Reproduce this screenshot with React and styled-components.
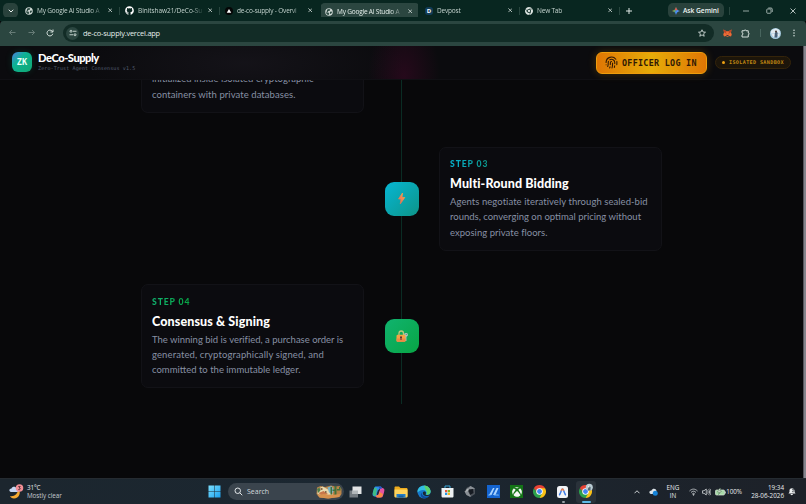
import React from "react";
import styled, { createGlobalStyle } from "styled-components";
import { Fingerprint } from "lucide-react";
import { FaGithub, FaXbox } from "react-icons/fa";

const GlobalStyle = createGlobalStyle`
  * {
    box-sizing: border-box;
  }
  body {
    margin: 0;
    background: #08080a;
    overflow: hidden;
    font-family: "Open Sans", "Noto Sans", sans-serif;
  }
  svg {
    display: block;
    flex: none;
  }
`;

const Screen = styled.div`
  width: 806px;
  height: 504px;
  display: flex;
  flex-direction: column;
  overflow: hidden;
`;

/* ---------- browser ---------- */

const TabStrip = styled.div`
  height: 21px;
  flex: none;
  display: flex;
  align-items: center;
  background: #082620;
`;

const TabSearch = styled.div`
  width: 15px;
  height: 15px;
  margin: 0 2px 0 3px;
  border-radius: 5px;
  background: #29423c;
  display: flex;
  align-items: center;
  justify-content: center;
`;

const Tab = styled.div`
  width: 100px;
  height: ${(p) => (p.$active ? "18px" : "15px")};
  ${(p) => p.$active && "align-self: flex-end;"}
  padding: ${(p) => (p.$active ? "0 8px 1px 5px" : "0 8px 0 5px")};
  display: flex;
  align-items: center;
  border-radius: 5px 5px 0 0;
  background: ${(p) => (p.$active ? "linear-gradient(#2b4640, #2b4640) 1px 0 / 97px 100% no-repeat" : "none")};
`;

const TabTitle = styled.span`
  flex: 1;
  margin: 0 6px 0 4px;
  overflow: hidden;
  white-space: nowrap;
  font-size: 6.5px;
  line-height: 12px;
  letter-spacing: ${(p) => p.$ls || -0.2}px;
  color: ${(p) => (p.$active ? "#e4eeea" : "#c3d2cd")};
  mask-image: linear-gradient(90deg, #000 54px, transparent 66px);
`;

const Divider = styled.i`
  width: 1px;
  height: ${(p) => p.$h || 8}px;
  margin: ${(p) => p.$m || "0 0 0 -1px"};
  background: ${(p) => p.$c || "#29463f"};
`;

const PlusBox = styled.div`
  width: 18px;
  display: flex;
  justify-content: center;
`;

const GeminiButton = styled.div`
  width: 56px;
  height: 15px;
  margin-left: 30px;
  padding-left: 4px;
  display: flex;
  align-items: center;
  gap: 3px;
  border-radius: 5px;
  background: #29423c;
  color: #eef5f2;
  font-size: 6.7px;
  font-weight: 600;
  letter-spacing: -0.05px;
  white-space: nowrap;
`;

const WindowButtons = styled.div`
  display: flex;
  align-items: center;
  gap: 17px;
  margin-left: 13px;
`;

const Toolbar = styled.div`
  height: 25px;
  flex: none;
  display: flex;
  align-items: center;
  padding: 0 8px 1px 9px;
  background: #2b4640;
  border-radius: 4px 4px 0 0;
  box-shadow: 0 -5px 0 -1px #082620;
`;

const NavIcons = styled.div`
  width: 54px;
  display: flex;
  gap: 11.5px;
`;

const AddressBar = styled.div`
  width: 651px;
  height: 18px;
  padding: 0 8px 0 3px;
  display: flex;
  align-items: center;
  border-radius: 9px;
  background: #122c26;
`;

const SiteInfo = styled.div`
  width: 13px;
  height: 13px;
  border-radius: 50%;
  background: #2b4640;
  display: flex;
  align-items: center;
  justify-content: center;
`;

const Url = styled.span`
  flex: 1;
  margin-left: 4px;
  font-size: 7.4px;
  letter-spacing: -0.2px;
  color: #e6efec;
`;

const ToolbarRight = styled.div`
  flex: 1;
  padding-left: 9px;
  display: flex;
  align-items: center;
  justify-content: space-between;
`;

/* ---------- page ---------- */

const Page = styled.div`
  height: 432px;
  flex: none;
  display: flex;
`;

const Scrollbar = styled.div`
  width: 3px;
  background: #85858d;
  border-left: 1px solid #56565d;
`;

const PageBody = styled.div`
  width: 803px;
  height: 432px;
  overflow: hidden;
  background: #08080a;
`;

const Header = styled.header`
  height: 34px;
  padding: 0 12px;
  display: flex;
  align-items: center;
  background:
    radial-gradient(ellipse 36px 60px at 404px 30px, rgba(64, 8, 40, 0.5), transparent),
    radial-gradient(ellipse 160px 44px at 245px 17px, rgba(34, 30, 40, 0.4), transparent),
    #0b0b0e;
  border-bottom: 1px solid #101014;
`;

const Logo = styled.div`
  width: 20px;
  height: 20px;
  margin-top: -1px;
  border-radius: 6px;
  background: linear-gradient(135deg, #4b7fe0 0%, #0eb293 38%, #10a973 100%);
  box-shadow: 0 0 7px rgba(16, 185, 129, 0.18);
  color: #e8fff8;
  font: bold 8.6px/20px "DejaVu Sans Mono", monospace;
  text-align: center;
`;

const Brand = styled.div`
  flex: 1;
  margin: -1px 0 0 6px;
`;

const BrandName = styled.div`
  font: 900 11.2px/12px Lato, sans-serif;
  letter-spacing: -0.5px;
  color: #fff;
`;

const Tagline = styled.div`
  margin-top: 1px;
  font: 5px/7px "DejaVu Sans Mono", monospace;
  letter-spacing: 0.13px;
  color: #535d70;
`;

const LoginButton = styled.button`
  width: 111px;
  height: 22px;
  padding: 0 0 0 8px;
  display: flex;
  align-items: center;
  gap: 4px;
  border: 1px solid #ee9d0c;
  border-radius: 6px;
  background: linear-gradient(90deg, #df7604, #e6ac08 50%, #df7604);
  box-shadow: 0 0 9px rgba(234, 160, 8, 0.24);
  color: #301905;
  font: bold 8.4px/20px "DejaVu Sans Mono", monospace;
  letter-spacing: 0.3px;
  white-space: nowrap;
`;

const Badge = styled.div`
  width: 76px;
  height: 13px;
  margin-left: 8px;
  padding-left: 6px;
  display: flex;
  align-items: center;
  gap: 4px;
  border: 1px solid #34240a;
  border-radius: 7px;
  background: #1c150a;
  color: #c08812;
  font: bold 5.1px/11px "DejaVu Sans Mono", monospace;
  letter-spacing: 0.37px;
  white-space: nowrap;

  &::before {
    content: "";
    width: 3px;
    height: 3px;
    border-radius: 50%;
    background: #eda112;
  }
`;

const Timeline = styled.main`
  width: 521px;
  height: 324px;
  margin-left: 141px;
  display: grid;
  grid-template-columns: 223px 75px 223px;
  grid-template-rows: 33px 104px 104px;
  row-gap: 33.5px;
  align-items: center;
  align-content: start;
  justify-items: center;
  background: linear-gradient(#0a2c24, #0a2c24) 260px 0 / 1px 100% no-repeat;
`;

const Card = styled.article`
  grid-column: ${(p) => (p.$side === "right" ? 3 : 1)};
  grid-row: ${(p) => p.$row};
  width: 223px;
  height: 100%;
  padding: 11.5px 10px 10px;
  border: 1px solid #121217;
  border-radius: 7px;
  background: #0b0b0f;
  font-family: Lato, sans-serif;

  /* scrolled under the header: only the end of the card is left */
  ${(p) =>
    p.$scrolled &&
    `
    display: flex;
    flex-direction: column;
    justify-content: flex-end;
    overflow: hidden;
    border-top: 0;
    border-radius: 0 0 7px 7px;
  `}
`;

const StepLabel = styled.div`
  width: max-content;
  font-size: 8.6px;
  font-weight: 900;
  line-height: 11px;
  letter-spacing: 0.9px;
  color: transparent;
  background: linear-gradient(90deg, ${(p) => p.$from}, ${(p) => p.$to});
  background-clip: text;
`;

const CardTitle = styled.h3`
  margin: 5px 0 2px;
  font-size: 12.5px;
  font-weight: 900;
  line-height: 17px;
  letter-spacing: 0.12px;
  color: #fff;
`;

const Line = styled.div`
  flex: none;
  font-size: 9.5px;
  line-height: 15.3px;
  letter-spacing: ${(p) => p.$ls || 0}px;
  color: #8790a4;
  white-space: nowrap;
`;

const Node = styled.div`
  grid-column: 2;
  grid-row: ${(p) => p.$row};
  width: 34px;
  height: 34px;
  border-radius: 9px;
  background: linear-gradient(135deg, ${(p) => p.$from}, ${(p) => p.$to});
  display: flex;
  align-items: center;
  justify-content: center;
`;

/* ---------- taskbar ---------- */

const Taskbar = styled.footer`
  height: 26px;
  flex: none;
  padding: 0 10px 0 9px;
  display: flex;
  align-items: center;
  background: linear-gradient(90deg, #1c262e, #1b2731 45%, #1d2128);
  border-top: 1px solid #252b31;
  color: #e9ecee;
  font-size: 6.3px;
  line-height: 8px;
`;

const Weather = styled.div`
  width: 199px;
  display: flex;
  align-items: center;
  gap: 3px;
  letter-spacing: -0.1px;

  small {
    display: block;
    font-size: 6.3px;
    letter-spacing: -0.05px;
    color: #c5cacf;
  }
`;

const SearchBox = styled.div`
  width: 116px;
  height: 17px;
  margin: 0 1px 0 7px;
  padding: 0 2px 0 6px;
  display: flex;
  align-items: center;
  gap: 4px;
  border-radius: 9px;
  background: #3a444d;
  font-size: 7px;

  span {
    flex: 1;
    color: #d3d8dc;
  }
`;

const Apps = styled.div`
  display: flex;
  align-items: center;
  gap: 3.1px;
`;

const AppSlot = styled.div`
  position: relative;
  width: 20px;
  height: 22px;
  display: flex;
  align-items: center;
  justify-content: center;
  border-radius: 3px;
  background: ${(p) => (p.$active ? "#2a323a" : "none")};
`;

const RunMark = styled.i`
  position: absolute;
  bottom: 0;
  left: ${(p) => (p.$wide ? 6 : 9)}px;
  width: ${(p) => (p.$wide ? 9 : 3)}px;
  height: 2px;
  border-radius: 1px;
  background: ${(p) => (p.$wide ? "#5fb9e6" : "#9aa1a7")};
`;

const Tray = styled.div`
  flex: 1;
  display: flex;
  align-items: center;
  justify-content: flex-end;
`;

const TrayText = styled.div`
  width: ${(p) => p.$w}px;
  margin-left: ${(p) => p.$ml || 0}px;
  text-align: ${(p) => p.$align || "center"};
  letter-spacing: ${(p) => p.$ls || 0}px;
  white-space: nowrap;
`;

const TrayIcons = styled.div`
  display: flex;
  align-items: center;
  gap: 4px;
`;

/* ---------- drawings ---------- */

const Close = ({ size = 4.5, color = "#dce6e2", w = 1 }) => (
  <svg width={size} height={size} viewBox="0 0 6 6" stroke={color} strokeWidth={w}>
    <path d="M.5.5l5 5M5.5.5l-5 5" />
  </svg>
);

const Globe = () => (
  <svg width="8" height="8" viewBox="0 0 16 16">
    <circle cx="8" cy="8" r="7.500" fill="#cfd9d5" />
    <path d="M2 8.500l5 .5 1.500 3-1.500 2C4 13.500 2 11.500 2 8.500zM4.500 3l3.500-1 2.500 1-1 2.500-3 .5-.5 2-3-.5zM10 7.500l3.500-.5.3 2.500-2.300 2.500-2-1z" fill="#2c4a42" />
  </svg>
);

const Vercel = () => (
  <svg width="8" height="8" viewBox="0 0 16 16">
    <circle cx="8" cy="8" r="8" fill="#050606" />
    <path d="M8 4l4.500 7.500h-9z" fill="#fff" />
  </svg>
);

const DevpostIcon = styled.div`
  width: 8px;
  height: 8px;
  border-radius: 3px;
  background: #123d58;
  color: #fff;
  font: bold 6px/8px "Open Sans", sans-serif;
  text-align: center;
`;

const Chrome = ({ size = 13, mono, badge }) => {
  const [r, y, g, b] = mono
    ? ["#dfe6e3", "#dfe6e3", "#dfe6e3", "#dfe6e3"]
    : ["#e74235", "#fbc116", "#2ba24c", "#4285f4"];
  return (
    <svg width={size} height={size} viewBox="0 0 24 24" overflow="visible">
      <path d="M12 12L1.600 6A12 12 0 0 1 22.400 6z" fill={r} />
      <path d="M12 12V6h10.400A12 12 0 0 1 12 24z" fill={y} />
      <path d="M1.600 6A12 12 0 0 0 12 24l5.200-9L12 12 6.800 15z" fill={g} />
      <path d="M1.600 6l5.200 9L12 12 8 6z" fill={mono ? g : r} />
      <path d="M1.600 6L6.800 15 12 17 8 12z" fill={g} />
      {mono && <path d="M12 6h10.400M6.800 15L1.600 6M17.200 15L12 24" stroke="#082620" strokeWidth="1.600" />}
      <circle cx="12" cy="12" r="6" fill={mono ? "#082620" : "#fff"} />
      <circle cx="12" cy="12" r={mono ? 3.5 : 4.5} fill={b} />
      {badge && (
        <g>
          <circle cx="19" cy="4" r="6.500" fill="#b9cbd3" />
          <path d="M16 10l1-5 2-3 2.500 2L21 10z" fill="#52656f" />
          <circle cx="18" cy="3" r="1.500" fill="#f0ede7" />
        </g>
      )}
    </svg>
  );
};

const GeminiStar = () => (
  <svg width="8" height="8" viewBox="0 0 16 16">
    <defs>
      <linearGradient id="gem" x1="0" y1="0.300" x2="1" y2="0.700">
        <stop offset="0.100" stopColor="#f6c343" />
        <stop offset="0.350" stopColor="#5aa66d" />
        <stop offset="0.550" stopColor="#4286f5" />
        <stop offset="0.900" stopColor="#6fa5ff" />
      </linearGradient>
    </defs>
    <path d="M8 0c1 4.500 3.500 7 8 8-4.500 1-7 3.500-8 8-1-4.500-3.500-7-8-8 4.500-1 7-3.500 8-8z" fill="url(#gem)" />
    <path d="M8 0c.6 2.600 1.600 4.500 3.200 5.800L8 7 5.500 5.200C6.700 3.900 7.500 2.200 8 0z" fill="#e8574c" />
  </svg>
);

const Arrow = ({ flip }) => (
  <svg width="7" height="7" viewBox="0 0 14 14" fill="none" stroke="#71857f" strokeWidth="1.700">
    <path d={flip ? "M1 7h12M8 2l5 5-5 5" : "M13 7H1M6 2L1 7l5 5"} />
  </svg>
);

const Reload = () => (
  <svg width="8" height="8" viewBox="0 0 16 16" fill="none" stroke="#dce7e3" strokeWidth="1.900">
    <path d="M13.500 9.500A5.800 5.800 0 1 1 12 4l1.500 1.500" />
    <path d="M14 1v5H9" />
  </svg>
);

const Tune = () => (
  <svg width="8" height="8" viewBox="0 0 16 16" fill="none" stroke="#dce7e3" strokeWidth="1.700">
    <circle cx="4" cy="4.500" r="2" />
    <path d="M8 4.500h7M1 11.500h7" />
    <circle cx="12" cy="11.500" r="2" />
  </svg>
);

const Star = () => (
  <svg width="8" height="8" viewBox="0 0 16 16" fill="none" stroke="#e0e9e6" strokeWidth="1.600">
    <path d="M8 1.500l2 4.500 5 .4-3.800 3.200 1.200 4.900L8 11.800l-4.400 2.700 1.200-4.900L1 6.400 6 6z" />
  </svg>
);

const Fox = () => (
  <svg width="9" height="8" viewBox="0 0 18 16">
    <path d="M1 1l6 3.500h4L17 1l-1 6 1.500 4-1.500 4-4-1-2 1.500H8L6 14l-4 1L.5 11 2 7z" fill="#ee6b35" />
    <path d="M1 1l6 3.500L6 8 2 7zM17 1l-6 3.500L12 8l4-1z" fill="#b94529" />
    <path d="M7 12h4v2H7z" fill="#3a3a3e" />
    <path d="M5 9l2 .5-.5 1zM13 9l-2 .5.5 1z" fill="#20343f" />
  </svg>
);

const Puzzle = () => (
  <svg width="9" height="9" viewBox="0 0 18 18" fill="none" stroke="#dce7e3" strokeWidth="1.900">
    <path d="M2 3.500h4.500C6.500 1 10 1 10 3.500h4.500V8c2.500 0 2.500 3.500 0 3.500V16H2v-4.200c2.500 0 2.500-4.300 0-4.300z" />
  </svg>
);

const Avatar = () => (
  <svg width="11" height="11" viewBox="0 0 22 22">
    <circle cx="11" cy="11" r="11" fill="#a8cbe0" />
    <path d="M2 6c3-5 12-7 17-1l1 6H2z" fill="#dfeaf0" />
    <path d="M9 19l.5-8 2-4 3 1 1 4-1.500 7z" fill="#4a6076" />
    <circle cx="12" cy="7" r="2" fill="#4b3b35" />
    <path d="M3 13l6-2-1 8zM15 12l5 1-3 5z" fill="#e9edf0" />
  </svg>
);

const Bolt = () => (
  <svg width="9" height="13" viewBox="0 0 18 26">
    <defs>
      <linearGradient id="bolt" x1="1" y1="0" x2="0" y2="1">
        <stop offset="0" stopColor="#ffad43" />
        <stop offset="0.600" stopColor="#f17c54" />
        <stop offset="1" stopColor="#d9734f" />
      </linearGradient>
    </defs>
    <path d="M11 2L3 14h5L6.500 24 15.500 11h-5.500z" fill="url(#bolt)" stroke="url(#bolt)" strokeWidth="1.500" strokeLinejoin="round" />
  </svg>
);

const LockKey = () => (
  <svg width="14" height="14" viewBox="0 0 28 28">
    <path d="M19 9h6v5l-2 1v9h-5z" fill="#a5bcb5" />
    <circle cx="22" cy="11.500" r="3.500" fill="#b4c4c0" />
    <circle cx="22.500" cy="11" r="1.200" fill="#4c8570" />
    <path d="M8 13V8.500a4.500 4.500 0 0 1 9 0V13" fill="none" stroke="#b7c67c" strokeWidth="2.600" />
    <rect x="3" y="11.500" width="18" height="14" rx="2.500" fill="#f4a344" />
    <path d="M3 19h18v4a2.500 2.500 0 0 1-2.500 2.500h-13A2.500 2.500 0 0 1 3 23z" fill="#ed8845" />
    <circle cx="12" cy="16.500" r="2" fill="#51343c" />
    <path d="M11 17h2v5h-2z" fill="#51343c" />
  </svg>
);

const WeatherIcon = () => (
  <svg width="15" height="16" viewBox="0 0 30 32">
    <path d="M19 9c6 8 1 20-9 20-4 0-7-2-8-5 8 2 16-4 17-15z" fill="#f6a930" />
    <path d="M4 16c-5-1-4-7 1-7 1-5 9-5 10 0 6 0 6 7 1 7z" fill="#c5d7f3" />
    <circle cx="21" cy="8" r="7.500" fill="#f28e95" />
    <path d="M18.500 5h4L20 8c4-.5 3.500 4.500-1.500 3" fill="none" stroke="#3b2229" strokeWidth="1.500" />
  </svg>
);

const Windows = () => (
  <svg width="13" height="13" viewBox="0 0 26 26">
    <defs>
      <linearGradient id="win" x1="0" y1="0" x2="1" y2="1">
        <stop offset="0" stopColor="#7be0ff" />
        <stop offset="1" stopColor="#1ba0ee" />
      </linearGradient>
    </defs>
    <path d="M1 1h11.500v11.500H1zM13.500 1H25v11.500H13.500zM1 13.500h11.500V25H1zM13.500 13.500H25V25H13.500z" fill="url(#win)" />
  </svg>
);

const SearchArt = () => (
  <svg width="26" height="14" viewBox="0 0 52 28">
    <path d="M2 5l7-3 9 2 12-3 8 2 9-1 4 6v10l-4 6-22 3-18-2-6-7z" fill="#b98348" />
    <path d="M3 8l10-5 13 7 8 9-20 2L3 18z" fill="#e8d9ae" />
    <path d="M5 16l10-4 9 6-12 4z" fill="#c8774a" />
    <path d="M23 5l8-3 5 8-4 8-6-3z" fill="#7bb4c7" />
    <path d="M29 4h3v15h-3zM37 2h4v20h-4zM33 9h4v3h-4zM42 8h5v3h-5zM46 4h3v7h-3z" fill="#41703b" />
    <path d="M3 20l12-2 16 2 18-2-3 6-22 3-17-2z" fill="#d6914e" />
    <path d="M2 8l5-3 2 6-5 5z" fill="#4f7b47" />
    <path d="M9 6h4v4H9zM18 12h3v4h-3z" fill="#8a6a49" />
  </svg>
);

const TaskView = () => (
  <svg width="13" height="12" viewBox="0 0 26 24">
    <rect x="1" y="9" width="17" height="14" fill="#747b81" />
    <rect x="7" y="1" width="18" height="15" fill="#e2e4e5" />
    <path d="M7 9h11v7H7z" fill="#b2b7ba" />
  </svg>
);

const Copilot = () => (
  <svg width="13" height="12" viewBox="0 0 26 24">
    <path d="M8 1h8c2 0 3 1 4 4l-6 1-4 12c-1 3-2 4-5 3-5-1-4-5-3-9C4 6 4 1 8 1z" fill="#2c8eea" />
    <path d="M2 12c1-4 2-7 3-9l5 2-2 14c-1 2-8 2-6-7z" fill="#41bd86" />
    <path d="M18 23h-7c-2 0-3-1-4-3l5-2 4-12c1-3 3-3 5-2 5 1 4 5 3 9-2 6-2 10-6 10z" fill="#e453a0" />
    <path d="M8 19l5-1 2-6 7 4c-1 5-3 7-6 7h-4c-2 0-3-1-4-4z" fill="#fa8a42" />
    <path d="M13 1h4c2 0 3 2 3 4l-5 1z" fill="#2756c4" />
    <path d="M12 8h3l-3 9H9z" fill="#232b40" />
  </svg>
);

const Folder = () => (
  <svg width="14" height="12" viewBox="0 0 28 24">
    <path d="M1 3c0-1 1-2 2-2h7l3 3h12c1 0 2 1 2 2v15H1z" fill="#edab1d" />
    <path d="M1 7h26v14c0 1-1 2-2 2H3c-1 0-2-1-2-2z" fill="#fed35d" />
    <path d="M5 16h18v7H5z" fill="#247ec8" />
    <path d="M9 19h10v4H9z" fill="#175d9c" />
  </svg>
);

const Edge = () => (
  <svg width="14" height="14" viewBox="0 0 28 28">
    <circle cx="14" cy="14" r="13" fill="#1578cb" />
    <path d="M1 12C3-2 26-2 27 13c0 5-4 7-9 6 3-4 0-9-6-9-5 0-8 2-11 5z" fill="#32bee0" />
    <path d="M14 1c8 0 13 6 13 12 0 5-4 7-9 6 3-2 2-6 0-8z" fill="#5ad26c" />
    <path d="M10 15c-2 6 5 10 14 7-3 4-8 6-12 4-5-2-6-8-2-11z" fill="#0e4a9b" />
    <path d="M12 14c2-2 6-1 6 2l-1 3c3 2 7 1 9-1l-1 3c-7 3-15 0-13-7z" fill="#1b2731" />
  </svg>
);

const Store = () => (
  <svg width="13" height="13" viewBox="0 0 26 26">
    <path d="M8 7V2h10v5" fill="none" stroke="#3ba8dc" strokeWidth="2" />
    <path d="M1 6h24v16c0 2-1 3-3 3H4c-2 0-3-1-3-3z" fill="#edf1f3" />
    <path d="M8 10h4.500v4.500H8z" fill="#ed5234" />
    <path d="M13.500 10H18v4.500h-4.500z" fill="#76b82a" />
    <path d="M8 15.500h4.500V20H8z" fill="#2499e3" />
    <path d="M13.500 15.500H18V20h-4.500z" fill="#f8b819" />
  </svg>
);

const Cube = () => (
  <svg width="12" height="13" viewBox="0 0 24 26">
    <path d="M13 2l9 5v11l-9 6-8-4-4-7 5-8z" fill="#4b5158" />
    <path d="M13 2l9 5-9 3-7-2zM1 13l6-1 6 8v4l-8-4z" fill="#8a9096" />
    <path d="M9 9l9-1 1 8-7 4z" fill="#161b22" />
    <path d="M6 7l4 2-3 4-5 1z" fill="#aeb3b6" />
  </svg>
);

const BlueApp = () => (
  <svg width="13" height="13" viewBox="0 0 26 26">
    <path d="M0 0h26v26H0z" fill="#1464cf" />
    <path d="M4 20L12 6l3 0-6 14zM12 20l7-14h4l-6 14z" fill="#a9d4ff" />
    <path d="M3 19h5l-1 2H2zM15 19h8l1 2H14z" fill="#75b7f7" />
  </svg>
);

const XboxTile = styled.div`
  width: 13px;
  height: 13px;
  background: #147417;
  color: #f2f7f2;
  display: flex;
  align-items: center;
  justify-content: center;
`;

const Antigravity = () => (
  <svg width="11" height="12" viewBox="0 0 22 24">
    <rect width="22" height="24" rx="5" fill="#f2f4f7" />
    <path d="M4 18c4-1 4-12 7-12s3 11 7 12" fill="none" stroke="#3f7ee8" strokeWidth="3" />
    <path d="M8.500 9.500C9.500 7 10 6 11 6s1.600 1 2.500 3.500" fill="none" stroke="#ec8050" strokeWidth="3" />
  </svg>
);

const TrayGlyphs = () => (
  <TrayIcons>
    <svg width="9" height="8" viewBox="0 0 18 16" fill="none" stroke="#c1c6ca" strokeWidth="1.800">
      <path d="M1 6c5-5 11-5 16 0M4 9c3-3.500 7-3.500 10 0M6.500 12c1.500-2 3.500-2 5 0" />
      <circle cx="9" cy="13.500" r="1" fill="#c1c6ca" />
    </svg>
    <svg width="9" height="8" viewBox="0 0 18 16" fill="none" stroke="#dce0e2" strokeWidth="1.500">
      <path d="M1 5.500h3L8.500 2v12L4 10.500H1zM11 5c1.500 2 1.500 4 0 6M13 3c3 3 3 7 0 10M15.500 1.500c3.500 4 3.500 9 0 13" />
    </svg>
    <svg width="11" height="8" viewBox="0 0 22 16">
      <rect x="1" y="4" width="18" height="10" rx="2" fill="#a8d9a9" stroke="#d8e6d8" strokeWidth="1.400" />
      <path d="M19.500 7h2v4h-2z" fill="#d8e6d8" />
      <path d="M9 1l-4 7h4l-2 5 6-7H9l3-5z" fill="#e7f5e6" stroke="#284a31" strokeWidth=".8" />
    </svg>
  </TrayIcons>
);

const tabs = [
  { icon: <Globe />, title: "My Google AI Studio A" },
  { icon: <FaGithub size={9} color="#fff" />, title: "Binitshaw21/DeCo-Su", ls: -0.06 },
  { icon: <Vercel />, title: "de-co-supply - Overvi" },
  { icon: <Globe />, title: "My Google AI Studio A", active: true },
  { icon: <DevpostIcon>D</DevpostIcon>, title: "Devpost" },
  { icon: <Chrome size={8} mono />, title: "New Tab" },
];

const steps = [
  {
    row: 1,
    side: "left",
    scrolled: true,
    lines: [["initialized inside isolated cryptographic", 0.02], ["containers with private databases.", 0.06]],
  },
  {
    row: 2,
    side: "right",
    label: "STEP 03",
    title: "Multi-Round Bidding",
    lines: [["Agents negotiate iteratively through sealed-bid", 0.06], ["rounds, converging on optimal pricing without", 0], ["exposing private floors.", 0.02]],
    from: "#06b6d4",
    to: "#0d9488",
    icon: <Bolt />,
  },
  {
    row: 3,
    side: "left",
    label: "STEP 04",
    title: "Consensus & Signing",
    lines: [["The winning bid is verified, a purchase order is", -0.01], ["generated, cryptographically signed, and", 0.12], ["committed to the immutable ledger.", 0]],
    from: "#10b36f",
    to: "#08a544",
    icon: <LockKey />,
  },
];

const apps = [
  <TaskView />,
  <Copilot />,
  <Folder />,
  <Edge />,
  <Store />,
  <Cube />,
  <BlueApp />,
  <XboxTile><FaXbox size={10} /></XboxTile>,
  <Chrome />,
  <Antigravity />,
  <Chrome badge />,
];

const BrowserChrome = () => (
  <>
    <TabStrip>
      <TabSearch>
        <svg width="6" height="4" viewBox="0 0 12 8" fill="none" stroke="#e8f0ed" strokeWidth="2">
          <path d="M1.500 1.500L6 6l4.500-4.500" />
        </svg>
      </TabSearch>
      {tabs.map((tab, i) => (
        <React.Fragment key={i}>
          <Tab $active={tab.active}>
            {tab.icon}
            <TabTitle $active={tab.active} $ls={tab.ls}>{tab.title}</TabTitle>
            <Close />
          </Tab>
          <Divider $c={i === 2 || i === 3 ? "transparent" : undefined} />
        </React.Fragment>
      ))}
      <PlusBox>
        <svg width="6" height="6" viewBox="0 0 12 12" stroke="#e0e9e6" strokeWidth="2">
          <path d="M6 0v12M0 6h12" />
        </svg>
      </PlusBox>
      <GeminiButton>
        <GeminiStar />
        Ask Gemini
      </GeminiButton>
      <Divider $m="0 0 0 5px" />
      <WindowButtons>
        <svg width="6" height="6" viewBox="0 0 6 6" stroke="#b8c7c2" strokeWidth=".8">
          <path d="M0 3h6" />
        </svg>
        <svg width="7" height="7" viewBox="0 0 14 14" fill="none" stroke="#c9d5d1" strokeWidth="1.500">
          <rect x="1.500" y="4" width="8.500" height="8.500" rx="1.500" />
          <path d="M4.500 2h5.500a2.500 2.500 0 0 1 2.500 2.500V10" />
        </svg>
        <Close size={6} w={0.8} />
      </WindowButtons>
    </TabStrip>
    <Toolbar>
      <NavIcons>
        <Arrow />
        <Arrow flip />
        <Reload />
      </NavIcons>
      <AddressBar>
        <SiteInfo>
          <Tune />
        </SiteInfo>
        <Url>de-co-supply.vercel.app</Url>
        <Star />
      </AddressBar>
      <ToolbarRight>
        <Fox />
        <Puzzle />
        <Divider $m="0" $c="#48655e" />
        <Avatar />
        <svg width="8" height="8" viewBox="0 0 8 8" fill="#dce7e3">
          <circle cx="4" cy="1.200" r=".75" />
          <circle cx="4" cy="4" r=".75" />
          <circle cx="4" cy="6.800" r=".75" />
        </svg>
      </ToolbarRight>
    </Toolbar>
  </>
);

const App = () => {
  return (
    <Screen>
      <GlobalStyle />
      <BrowserChrome />
      <Page>
        <PageBody>
          <Header>
            <Logo>ZK</Logo>
            <Brand>
              <BrandName>DeCo-Supply</BrandName>
              <Tagline>Zero-Trust Agent Consensus v1.5</Tagline>
            </Brand>
            <LoginButton>
              <Fingerprint size={13} strokeWidth={2} />
              OFFICER LOG IN
            </LoginButton>
            <Badge>ISOLATED SANDBOX</Badge>
          </Header>
          <Timeline>
            {steps.map((step) => (
              <React.Fragment key={step.row}>
                <Card $side={step.side} $row={step.row} $scrolled={step.scrolled}>
                  {step.label && <StepLabel $from={step.from} $to={step.to}>{step.label}</StepLabel>}
                  {step.title && <CardTitle>{step.title}</CardTitle>}
                  {step.lines.map(([text, ls]) => (
                    <Line key={text} $ls={ls}>{text}</Line>
                  ))}
                </Card>
                {step.icon && (
                  <Node $row={step.row} $from={step.from} $to={step.to}>{step.icon}</Node>
                )}
              </React.Fragment>
            ))}
          </Timeline>
        </PageBody>
        <Scrollbar />
      </Page>
      <Taskbar>
        <Weather>
          <WeatherIcon />
          <div>
            31°C
            <small>Mostly clear</small>
          </div>
        </Weather>
        <Windows />
        <SearchBox>
          <svg width="9" height="9" viewBox="0 0 18 18" fill="none" stroke="#e2e6e8" strokeWidth="2">
            <circle cx="7.500" cy="7.500" r="5.500" />
            <path d="M11.500 11.500l5 5" />
          </svg>
          <span>Search</span>
          <SearchArt />
        </SearchBox>
        <Apps>
          {apps.map((icon, i) => (
            <AppSlot key={i} $active={i === 10}>
              {icon}
              {i >= 9 && <RunMark $wide={i === 10} />}
            </AppSlot>
          ))}
        </Apps>
        <Tray>
          <svg width="6" height="4" viewBox="0 0 12 8" fill="none" stroke="#dfe3e5" strokeWidth="1.800">
            <path d="M1 6.500L6 1.500l5 5" />
          </svg>
          <TrayText $w={9} $ml={9}>
            <svg width="9" height="8" viewBox="0 0 18 16">
              <path d="M4 12c-5-1-4-7 1-7 2-5 9-5 10 1l-4 6z" fill="#dce4e9" />
              <circle cx="12.500" cy="10.500" r="5" fill="#1683d8" />
            </svg>
          </TrayText>
          <TrayText $w={14} $ml={8}>
            ENG
            <br />
            IN
          </TrayText>
          <TrayText $w={38} $ml={9}>
            <TrayGlyphs />
          </TrayText>
          <TrayText $w={16} $ml={-1} $ls={-0.1}>100%</TrayText>
          <TrayText $w={36} $ml={6} $align="right">
            19:34
            <br />
            28-06-2026
          </TrayText>
          <TrayText $w={8} $ml={4}>
            <svg width="8" height="9" viewBox="0 0 16 18">
              <path d="M1 13l2-3V7c0-6 9-6 10 0v3l2 3zM5 14h5c0 3-5 3-5 0z" fill="#eef0f1" />
              <path d="M8 5h4L8.500 9.500H12" fill="none" stroke="#343a41" strokeWidth="1.300" />
            </svg>
          </TrayText>
        </Tray>
      </Taskbar>
    </Screen>
  );
};

export default App;
